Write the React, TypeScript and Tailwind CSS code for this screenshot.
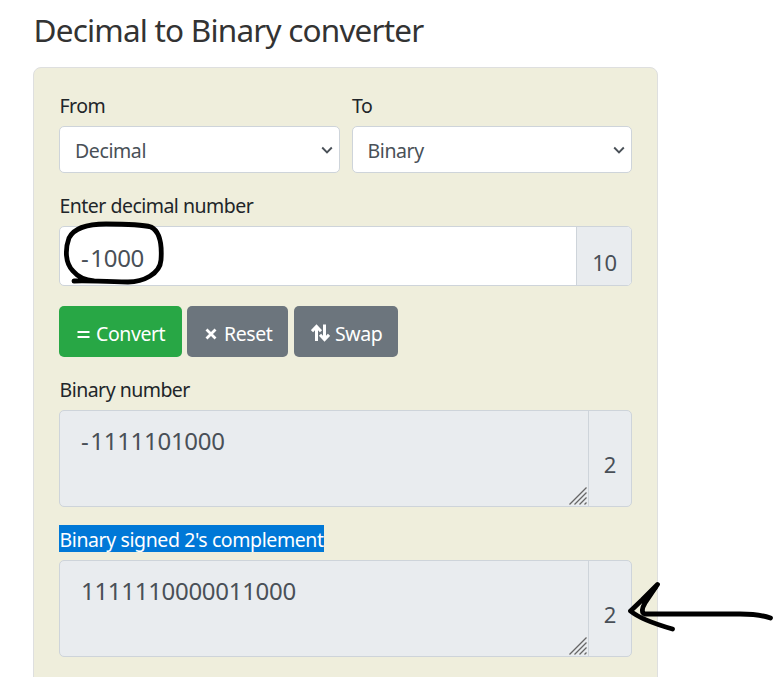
import React from "react";

function Chevron() {
  return (
    <svg width="12" height="8" viewBox="0 0 12 8" fill="none" stroke="#495057" strokeWidth="1.9">
      <path d="M1.2 1.500 6 6.300 10.800 1.500" />
    </svg>
  );
}

function Label({ children }: { children: React.ReactNode }) {
  return <div className="h-[27px] pl-[0.5px] text-[19.5px] leading-[27px] tracking-[-0.52px] text-[#212529]">{children}</div>;
}

function Picker({ label, value }: { label: string; value: string }) {
  return (
    <div className="min-w-0 flex-1">
      <Label>{label}</Label>
      <div className="mt-[7px] flex h-[47px] items-center justify-between rounded-[5px] border border-[#ced4da] bg-white pr-[6px] pl-[15px] text-[19.5px] tracking-[-0.4px] text-[#495057]">
        <span className="pt-[3px] leading-none">{value}</span>
        <Chevron />
      </div>
    </div>
  );
}

function Digits({ value }: { value: string }) {
  const negative = value.startsWith("-");
  return (
    <span className="text-[24px] leading-[34px] tracking-[-0.3px]">
      {negative && <span className="tracking-[1.6px]">-</span>}
      {negative ? value.slice(1) : value}
    </span>
  );
}

function Result({ value }: { value: string }) {
  return (
    <div className="flex h-[97px] rounded-[5px] border border-[#ced4da] bg-[#e9ecef] text-[#495057]">
      <div className="flex flex-1 justify-between pt-[13px] pl-[21px]">
        <Digits value={value} />
        <svg className="mr-[1px] mb-[1px] self-end" width="18" height="18" viewBox="0 0 18 18" fill="none" stroke="#666" strokeWidth="1.3">
          <path d="M0.5 17.5 17.5 0.5M5.5 17.5 17.5 5.5M10.5 17.5 17.5 10.5M15.5 17.5 17.5 15.5" />
        </svg>
      </div>
      <div className="flex w-[43px] items-center justify-center border-l border-[#ced4da] pt-[11px] text-[22px] leading-none">2</div>
    </div>
  );
}

export default function App() {
  return (
    <main className="relative h-[677px] w-[773px] overflow-hidden bg-white pt-[7px] pl-[33px] font-['Noto_Sans','Open_Sans',sans-serif]">
      <h1 className="h-[60px] pl-[0.5px] text-[31.5px] leading-[45px] tracking-[-0.8px] whitespace-nowrap text-[#333]">Decimal to Binary converter</h1>
      <section className="h-[640px] w-[625px] rounded-[8px] border border-[#dedfdf] bg-[#efeedc] px-[25px] pt-[24px]">
        <div className="flex gap-3">
          <Picker label="From" value="Decimal" />
          <Picker label="To" value="Binary" />
        </div>
        <div className="mt-[19px]"><Label>Enter decimal number</Label></div>
        <div className="mt-[7px] flex h-[60px] rounded-[5px] border border-[#ced4da] bg-white text-[#495057]">
          <div className="flex flex-1 items-center pt-[4px] pl-[21px]"><Digits value="-1000" /></div>
          <div className="flex w-[55px] items-center justify-center rounded-r-[4px] border-l border-[#ced4da] bg-[#e9ecef] pt-[12px] pl-[1px] text-[22px] leading-none tracking-[-0.3px]">10</div>
        </div>
        <div className="mt-5 flex text-[19.5px] tracking-[-0.42px] text-white">
          <button className="flex h-[51px] w-[123px] items-center rounded-[5px] bg-[#28a745] pt-[5px] pl-[18px]">
            <svg width="13" height="12" viewBox="0 0 13 12" stroke="currentColor" strokeWidth="2"><path d="M0.5 4H12.5M0.5 9H12.5" /></svg>
            <span className="ml-[6px]">Convert</span>
          </button>
          <button className="ml-[5px] flex h-[51px] w-[101px] items-center rounded-[5px] bg-[#6c757d] pt-[5px] pl-[18px]">
            <svg width="12" height="12" viewBox="0 0 12 12" stroke="currentColor" strokeWidth="2.8"><path d="m1.5 1.5 9 9m0-9-9 9" /></svg>
            <span className="ml-[7px]">Reset</span>
          </button>
          <button className="ml-[6px] flex h-[51px] w-[104px] items-center rounded-[5px] bg-[#6c757d] pt-[5px] pl-[17px]">
            <svg className="mb-[2px]" width="19" height="18" viewBox="0 0 19 18" fill="none" stroke="currentColor" strokeWidth="3"><path d="M5.500 17V3M1 7.200l4.500-4.700L10 7.200M13.500 0.500v15M9 10.800l4.500 4.700 4.500-4.700" /></svg>
            <span className="ml-[5px]">Swap</span>
          </button>
        </div>
        <div className="mt-[19px] mb-[7px]"><Label>Binary number</Label></div>
        <Result value="-1111101000" />
        <div className="mt-[18px] mb-[8px] h-[27px] w-[265px] bg-[#0078d7] pl-[0.5px] text-[19.5px] leading-[29px] tracking-[-0.4px] whitespace-nowrap text-white">Binary signed 2's complement</div>
        <Result value="1111110000011000" />
      </section>
      <svg className="pointer-events-none absolute inset-0" width="773" height="677" viewBox="0 0 773 677" fill="none" stroke="#000" strokeLinecap="round" strokeLinejoin="round">
        <path strokeWidth="4.8" d="M74 281C88 280 101 282 128 282C143 282 160 274 161 260C162 246 161 232 151 227C144 225 122 224 106 224C91 224 75 226 69 238C65 249 65 263 73 271C78 277 84 280 94 281" />
        <path strokeWidth="4.800" d="M770.500 618C762 615 752 614 740 614H645C641 613 642 608 645 603L657.500 584.500L642 600L630.500 611C640 619 655 624 672.500 629" />
        <path strokeWidth="3" d="M656 588L644 602" />
      </svg>
    </main>
  );
}
